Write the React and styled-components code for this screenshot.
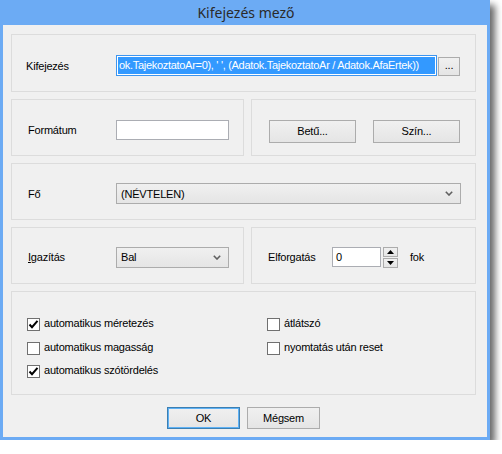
import React from 'react'
import styled, { createGlobalStyle } from 'styled-components'

const GlobalStyle = createGlobalStyle`
    * { box-sizing: border-box; }
    body {
        margin: 0;
        background: #ffffff;
        font-family: "Liberation Sans", Arial, sans-serif;
        font-size: 11px;
        letter-spacing: -0.2px;
        color: #000;
    }
`;

const Chevron = () => (
    <svg width="8" height="5" viewBox="0 0 8 5">
        <path d="M0.8 0.8 L4 4 L7.2 0.8" fill="none" stroke="#606060" strokeWidth="1.6" />
    </svg>
)

const Check = () => (
    <svg width="11" height="11" viewBox="0 0 11 11">
        <path d="M1.5 5.5 L4 8.2 L9.5 1.8" fill="none" stroke="#000" strokeWidth="2" />
    </svg>
)

const Arrow = ({ up }) => (
    <svg width="7" height="4" viewBox="0 0 7 4">
        <path d={up ? 'M0 4 L3.5 0 L7 4 Z' : 'M0 0 L3.5 4 L7 0 Z'} fill="#000" />
    </svg>
)

const CheckItem = ({ checked, children }) => (
    <CheckRow>
        <Box>{checked && <Check />}</Box>
        <span>{children}</span>
    </CheckRow>
)

const App = () => {
    return (
        <>
            <GlobalStyle />
            <Window>
                <TitleBar>Kifejezés mező</TitleBar>
                <Client>
                    <Group $h={57} $pt={5} $pl={14}>
                        <Label $w={90}>Kifejezés</Label>
                        <ExprInput>
                            <Selected>ok.TajekoztatoAr=0), ' ', (Adatok.TajekoztatoAr / Adatok.AfaErtek))</Selected>
                        </ExprInput>
                        <DotsButton>...</DotsButton>
                    </Group>
                    <Row>
                        <Group $h={57} $pt={5} $pl={16} $w={233}>
                            <Label $w={88}>Formátum</Label>
                            <TextBox $w={113} />
                        </Group>
                        <Group $h={57} $pt={7} $pl={17} $gap={17}>
                            <Button $w={87}>Betű...</Button>
                            <Button $w={87}>Szín...</Button>
                        </Group>
                    </Row>
                    <Group $h={58} $pt={4} $pl={16}>
                        <Label $w={88}>Fő</Label>
                        <Combo $w={345}>
                            <span>(NÉVTELEN)</span>
                            <Chevron />
                        </Combo>
                    </Group>
                    <Row>
                        <Group $h={57} $pt={3} $pl={16} $w={233}>
                            <Label $w={88}><u>I</u>gazítás</Label>
                            <Combo $w={113}>
                                <span>Bal</span>
                                <Chevron />
                            </Combo>
                        </Group>
                        <Group $h={57} $pt={3} $pl={16}>
                            <Label $w={64}>Elforgatás</Label>
                            <TextBox $w={49}>0</TextBox>
                            <Spinner>
                                <SpinButton><Arrow up /></SpinButton>
                                <SpinButton><Arrow /></SpinButton>
                            </Spinner>
                            <Unit>fok</Unit>
                        </Group>
                    </Row>
                    <Options>
                        <CheckItem checked>automatikus méretezés</CheckItem>
                        <CheckItem>átlátszó</CheckItem>
                        <CheckItem>automatikus magasság</CheckItem>
                        <CheckItem>nyomtatás után reset</CheckItem>
                        <CheckItem checked>automatikus szótördelés</CheckItem>
                    </Options>
                    <Footer>
                        <Button $w={73} $h={22} $default>OK</Button>
                        <Button $w={73} $h={22}>Mégsem</Button>
                    </Footer>
                </Client>
            </Window>
        </>
    )
}

export default App


const Window = styled.div`
    width: 490px;
    height: 440px;
    background: #6cabf4;
    padding: 0 3px 3px 3px;
    display: flex;
    flex-direction: column;
    box-shadow: 5px 5px 7px rgba(0, 0, 0, 0.6);
`;

const TitleBar = styled.div`
    height: 25px;
    display: flex;
    align-items: center;
    justify-content: center;
    font-family: "Noto Sans", "Open Sans", sans-serif;
    font-size: 14px;
    letter-spacing: 0;
    color: #2a2a2a;
    padding-left: 2px;
`;

const Client = styled.div`
    flex: 1;
    background: #f0f0f0;
    padding: 9px 11px 8px 8px;
    display: flex;
    flex-direction: column;
    gap: 7px;
`;

const Row = styled.div`
    display: flex;
    gap: 7px;
`;

const Group = styled.div`
    height: ${p => p.$h}px;
    ${p => p.$w ? `width: ${p.$w}px;` : 'flex: 1;'}
    border: 1px solid #dcdcdc;
    display: flex;
    align-items: center;
    gap: ${p => p.$gap || 0}px;
    padding-top: ${p => p.$pt}px;
    padding-left: ${p => p.$pl}px;
`;

const Label = styled.div`
    width: ${p => p.$w}px;
    flex-shrink: 0;
`;

const ExprInput = styled.div`
    width: 321px;
    height: 21px;
    border: 1px solid #3d95ef;
    background: #fff;
    padding: 1px;
    overflow: hidden;
    display: flex;
`;

const Selected = styled.span`
    flex: 1;
    background: #3399ff;
    color: #fff;
    white-space: nowrap;
    overflow: hidden;
    line-height: 17px;
    padding-left: 1px;
    letter-spacing: -0.3px;
`;

const DotsButton = styled.div`
    width: 22px;
    height: 19px;
    margin-left: 1px;
    margin-top: 1px;
    border: 1px solid #acacac;
    background: linear-gradient(#f0f0f0, #e5e5e5);
    display: flex;
    align-items: center;
    justify-content: center;
    padding-bottom: 2px;
`;

const TextBox = styled.div`
    width: ${p => p.$w}px;
    height: 20px;
    border: 1px solid #abadb3;
    background: #fff;
    display: flex;
    align-items: center;
    padding-left: 3px;
`;

const Button = styled.div`
    width: ${p => p.$w}px;
    height: ${p => p.$h || 23}px;
    border: 1px solid ${p => p.$default ? '#3c7fb1' : '#acacac'};
    box-shadow: ${p => p.$default ? 'inset 0 0 0 1px #5eb1f5' : 'none'};
    background: linear-gradient(#f0f0f0, #e5e5e5);
    display: flex;
    align-items: center;
    justify-content: center;
`;

const Combo = styled.div`
    width: ${p => p.$w}px;
    height: 21px;
    border: 1px solid #acacac;
    background: linear-gradient(#f0f0f0, #e5e5e5);
    display: flex;
    align-items: center;
    justify-content: space-between;
    padding: 0 7px 0 4px;
`;

const Spinner = styled.div`
    display: flex;
    flex-direction: column;
    gap: 1px;
    margin-left: 2px;
`;

const SpinButton = styled.div`
    width: 15px;
    height: 10px;
    border: 1px solid #acacac;
    background: linear-gradient(#f0f0f0, #e5e5e5);
    display: flex;
    align-items: center;
    justify-content: center;
`;

const Unit = styled.div`
    margin-left: 12px;
`;

const Options = styled.div`
    height: 104px;
    border: 1px solid #dcdcdc;
    display: grid;
    grid-template-columns: 240px 1fr;
    grid-auto-rows: 23.5px;
    align-content: start;
    padding: 25px 0 0 15px;
`;

const CheckRow = styled.div`
    display: flex;
    align-items: flex-start;
    gap: 4px;
`;

const Box = styled.div`
    width: 13px;
    height: 13px;
    border: 1px solid #707070;
    background: #fff;
    display: flex;
    align-items: center;
    justify-content: center;
    margin-top: 1px;
`;

const Footer = styled.div`
    display: flex;
    justify-content: center;
    gap: 7px;
    margin-top: 5px;
    padding-right: 0;
`;
